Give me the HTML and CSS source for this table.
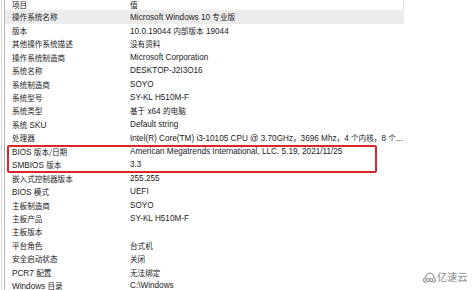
FILE: index.html
```html
<!DOCTYPE html>
<html lang="zh-CN">
<head>
<meta charset="utf-8">
<title>系统信息</title>
<link rel="stylesheet" href="styles.css">
</head>
<body>
<div class="window">
  <div class="list">
    <div class="row head"><span class="k zh">项目</span><span class="v zh">值</span></div>
    <div class="row sel"><span class="k zh">操作系统名称</span><span class="v">Microsoft Windows 10 <span class="zh">专业版</span></span></div>
    <div class="row"><span class="k zh">版本</span><span class="v">10.0.19044 <span class="zh">内部版本</span> 19044</span></div>
    <div class="row"><span class="k zh">其他操作系统描述</span><span class="v zh">没有资料</span></div>
    <div class="row"><span class="k zh">操作系统制造商</span><span class="v">Microsoft Corporation</span></div>
    <div class="row"><span class="k zh">系统名称</span><span class="v">DESKTOP-J2I3O16</span></div>
    <div class="row"><span class="k zh">系统制造商</span><span class="v">SOYO</span></div>
    <div class="row"><span class="k zh">系统型号</span><span class="v">SY-KL H510M-F</span></div>
    <div class="row"><span class="k zh">系统类型</span><span class="v"><span class="zh">基于</span> x64 <span class="zh">的电脑</span></span></div>
    <div class="row"><span class="k"><span class="zh">系统</span> SKU</span><span class="v">Default string</span></div>
    <div class="row"><span class="k zh">处理器</span><span class="v">Intel(R) Core(TM) i3-10105 CPU @ 3.70GHz<span class="zh">，</span>3696 Mhz<span class="zh">，</span>4 <span class="zh">个内核，</span>8 <span class="zh">个</span>...</span></div>
    <div class="row"><span class="k">BIOS <span class="zh">版本/日期</span></span><span class="v">American Megatrends International, LLC. 5.19, 2021/11/25</span></div>
    <div class="row"><span class="k">SMBIOS <span class="zh">版本</span></span><span class="v">3.3</span></div>
    <div class="row"><span class="k zh">嵌入式控制器版本</span><span class="v">255.255</span></div>
    <div class="row"><span class="k">BIOS <span class="zh">模式</span></span><span class="v">UEFI</span></div>
    <div class="row"><span class="k zh">主板制造商</span><span class="v">SOYO</span></div>
    <div class="row"><span class="k zh">主板产品</span><span class="v">SY-KL H510M-F</span></div>
    <div class="row"><span class="k zh">主板版本</span><span class="v"></span></div>
    <div class="row"><span class="k zh">平台角色</span><span class="v zh">台式机</span></div>
    <div class="row"><span class="k zh">安全启动状态</span><span class="v zh">关闭</span></div>
    <div class="row"><span class="k">PCR7 <span class="zh">配置</span></span><span class="v zh">无法绑定</span></div>
    <div class="row"><span class="k">Windows <span class="zh">目录</span></span><span class="v">C:\Windows</span></div>
  </div>
  <div class="mark"></div>
  <div class="logo">
    <svg class="cloud" width="13" height="11" viewBox="0 0 13 11" aria-hidden="true">
      <path d="M2.6 10.2 C1.2 10.2 0.6 9.1 0.6 8 C0.6 6.8 1.5 6 2.5 6 C2.4 3.9 3.9 1 6.6 1 C9.2 1 10.6 3.2 10.6 5.3 C11.8 5.5 12.4 6.6 12.4 7.7 C12.4 9 11.5 10.2 10.2 10.2" fill="none" stroke="#8c8c8c" stroke-width="1.1" stroke-linecap="round"/>
      <circle cx="4.6" cy="8.1" r="1.6" fill="none" stroke="#8c8c8c" stroke-width="1.1"/>
      <circle cx="8.3" cy="8.1" r="1.6" fill="none" stroke="#8c8c8c" stroke-width="1.1"/>
    </svg>
    <span class="logo-text">亿速云</span>
  </div>
</div>
</body>
</html>
```
FILE: styles.css
```css
html, body {
  margin: 0;
  padding: 0;
  background: #ffffff;
}

body {
  width: 474px;
  height: 290px;
  overflow: hidden;
  font-family: "Liberation Sans", Arial, "Noto Sans CJK SC", sans-serif;
  font-size: 8.2px;
  color: #222222;
}

.window {
  position: relative;
  height: 290px;
  margin-left: 1px;
  padding-left: 2px;
  border-left: 1px solid #dadada;
}

.list {
  width: 399px;
  border-left: 1px solid #b4b4b4;
}

.row {
  display: grid;
  grid-template-columns: 118px 1fr;
  height: 13.45px;
  line-height: 13.45px;
  padding-left: 7px;
  white-space: nowrap;
}

.row.head {
  height: 10.4px;
  line-height: 9px;
  border-right: 1px solid #e2e2e2;
}

.row.sel {
  background: #ececec;
}

.k, .v {
  overflow: hidden;
}

.zh {
  font-family: "Noto Sans CJK SC", sans-serif;
  font-size: 7.6px;
}

.mark {
  position: absolute;
  left: 5px;
  top: 145px;
  width: 366px;
  height: 24px;
  border: 2px solid #d9272c;
  border-radius: 2px;
}

.logo {
  position: absolute;
  left: 421px;
  top: 271px;
  display: flex;
  align-items: center;
  gap: 1px;
  color: #8c8c8c;
}

.logo-text {
  font-family: "Noto Sans CJK SC", sans-serif;
  font-size: 10px;
  line-height: 12px;
  letter-spacing: 0.2px;
}
```
